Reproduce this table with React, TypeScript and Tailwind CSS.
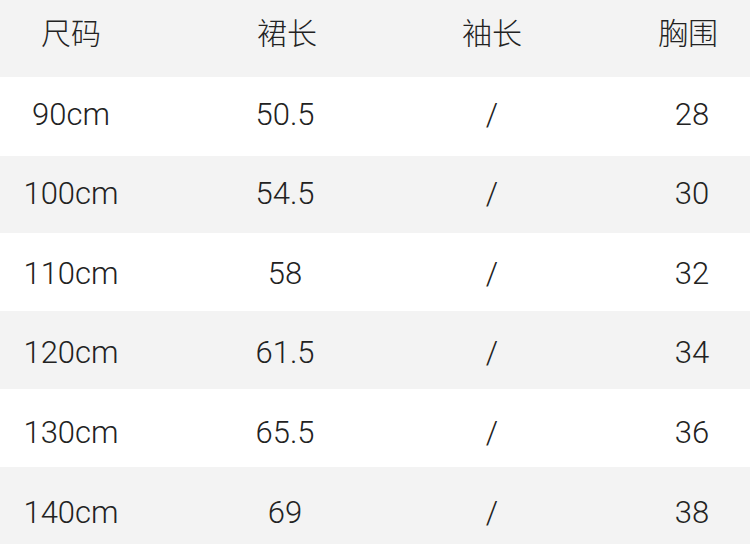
const rows = [
  { size: "90cm", skirt: "50.5", sleeve: "/", chest: "28", bg: "bg-white", h: "h-[79px]", pt: "pt-[22px]" },
  { size: "100cm", skirt: "54.5", sleeve: "/", chest: "30", bg: "bg-[#f3f3f3]", h: "h-[77px]", pt: "pt-[22px]" },
  { size: "110cm", skirt: "58", sleeve: "/", chest: "32", bg: "bg-white", h: "h-[78px]", pt: "pt-[25px]" },
  { size: "120cm", skirt: "61.5", sleeve: "/", chest: "34", bg: "bg-[#f3f3f3]", h: "h-[78px]", pt: "pt-[26px]" },
  { size: "130cm", skirt: "65.5", sleeve: "/", chest: "36", bg: "bg-white", h: "h-[78px]", pt: "pt-[28px]" },
  { size: "140cm", skirt: "69", sleeve: "/", chest: "38", bg: "bg-[#f3f3f3]", h: "h-[77px]", pt: "pt-[30px]" },
];

const font = { fontFamily: '"Roboto", "Noto Sans CJK SC", sans-serif' };

export default function App() {
  return (
    <div className="w-[750px] h-[544px] overflow-hidden bg-white text-[#222] font-light" style={font}>
      {/* header */}
      <div className="h-[77px] bg-[#f3f3f3] flex items-start pt-[18px] pl-[13px] text-[30px] leading-[32px]">
        <div className="w-[116px] text-center">尺码</div>
        <div className="w-[116px] ml-[98px] text-center pl-[4px]">裙长</div>
        <div className="w-[116px] ml-[91px] text-center">袖长</div>
        <div className="w-[116px] ml-[84px] text-center pr-[8px]">胸围</div>
      </div>
      {rows.map((r) => (
        <div key={r.size} className={`${r.bg} ${r.h} ${r.pt} flex items-start pl-[13px] text-[31px] leading-[32px]`}>
          <div className="w-[116px] text-center">{r.size}</div>
          <div className="w-[116px] ml-[98px] text-center">{r.skirt}</div>
          <div className="w-[116px] ml-[91px] text-center">{r.sleeve}</div>
          <div className="w-[116px] ml-[84px] text-center">{r.chest}</div>
        </div>
      ))}
    </div>
  );
}
